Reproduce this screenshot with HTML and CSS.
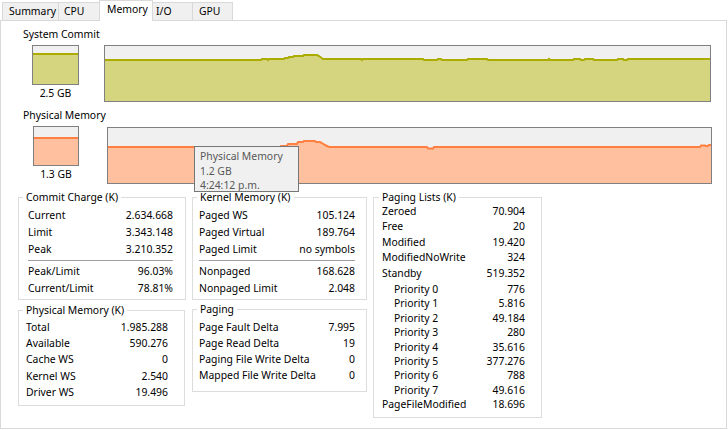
FILE: index.html
```html
<!DOCTYPE html>
<html lang="en">
<head>
<meta charset="utf-8">
<title>System Information - Memory</title>
<link rel="stylesheet" href="styles.css">
</head>
<body>
<div class="tabs">
  <div class="tab tab-summary">Summary</div>
  <div class="tab tab-cpu">CPU</div>
  <div class="tab tab-memory active">Memory</div>
  <div class="tab tab-io">I/O</div>
  <div class="tab tab-gpu">GPU</div>
</div>
<div class="panel">
  <div class="label">System Commit</div>
  <div class="meter-row">
    <div class="mini mini-commit">
      <div class="mini-box"><div class="mini-fill fill-commit"></div></div>
      <div class="mini-val">2.5 GB</div>
    </div>
    <div class="graph graph-commit">
      <svg width="605" height="55" viewBox="0 0 605 55">
        <polygon class="area-commit" points="0,14 156,14 157,13 162,13 163,14 164,13 179,13 180,12 183,12 184,11 188,11 189,10 198,10 199,9 212,9 214,10 216,11.5 218,13 256,13 257,14 258,13 318,13 319,14 332,14 333,13 336,13 337,14 362,14 363,13 382,13 383,14 443,14 444,13 445,14 468,14 469,13 475,13 476,14 479,14 480,13 488,13 489,14 512,14 513,13 518,13 519,14 522,14 523,13 605,13 605,55 0,55"/>
        <polyline class="line-commit" points="0,14 156,14 157,13 162,13 163,14 164,13 179,13 180,12 183,12 184,11 188,11 189,10 198,10 199,9 212,9 214,10 216,11.5 218,13 256,13 257,14 258,13 318,13 319,14 332,14 333,13 336,13 337,14 362,14 363,13 382,13 383,14 443,14 444,13 445,14 468,14 469,13 475,13 476,14 479,14 480,13 488,13 489,14 512,14 513,13 518,13 519,14 522,14 523,13 605,13"/>
      </svg>
    </div>
  </div>
  <div class="label">Physical Memory</div>
  <div class="meter-row">
    <div class="mini mini-phys">
      <div class="mini-box"><div class="mini-fill fill-phys"></div></div>
      <div class="mini-val">1.3 GB</div>
    </div>
    <div class="graph graph-phys">
      <svg width="603" height="55" viewBox="0 0 603 55">
        <polygon class="area-phys" points="0,19 172,19 173,18 179,18 180,16 189,16 190,14 195,14 196,13 207,13 208,14 212,14 214,15 216,16.5 218,17.5 220,18.5 222,19 319,19 320,20.5 325,20.5 326,19 592,19 593,17.5 597,17.5 598,18 600,18 601,17 603,17 603,55 0,55"/>
        <polyline class="line-phys" points="0,19 172,19 173,18 179,18 180,16 189,16 190,14 195,14 196,13 207,13 208,14 212,14 214,15 216,16.5 218,17.5 220,18.5 222,19 319,19 320,20.5 325,20.5 326,19 592,19 593,17.5 597,17.5 598,18 600,18 601,17 603,17"/>
      </svg>
    </div>
  </div>

  <div class="stats">
    <div class="col col-1">
      <fieldset class="group g-commit">
        <legend>Commit Charge (K)</legend>
        <div class="row r17"><span>Current</span><span>2.634.668</span></div>
        <div class="row r17"><span>Limit</span><span>3.343.148</span></div>
        <div class="row r17"><span>Peak</span><span>3.210.352</span></div>
        <div class="sep"></div>
        <div class="row r17"><span>Peak/Limit</span><span>96.03%</span></div>
        <div class="row r17"><span>Current/Limit</span><span>78.81%</span></div>
      </fieldset>
      <fieldset class="group g-physmem">
        <legend>Physical Memory (K)</legend>
        <div class="row r16"><span>Total</span><span>1.985.288</span></div>
        <div class="row r16"><span>Available</span><span>590.276</span></div>
        <div class="row r16"><span>Cache WS</span><span>0</span></div>
        <div class="row r16"><span>Kernel WS</span><span>2.540</span></div>
        <div class="row r16"><span>Driver WS</span><span>19.496</span></div>
      </fieldset>
    </div>
    <div class="col col-2">
      <fieldset class="group g-kernel">
        <legend>Kernel Memory (K)</legend>
        <div class="row r17"><span>Paged WS</span><span>105.124</span></div>
        <div class="row r17"><span>Paged Virtual</span><span>189.764</span></div>
        <div class="row r17"><span>Paged Limit</span><span>no symbols</span></div>
        <div class="sep"></div>
        <div class="row r17"><span>Nonpaged</span><span>168.628</span></div>
        <div class="row r17"><span>Nonpaged Limit</span><span>2.048</span></div>
      </fieldset>
      <fieldset class="group g-paging">
        <legend>Paging</legend>
        <div class="row r16b"><span>Page Fault Delta</span><span>7.995</span></div>
        <div class="row r16b"><span>Page Read Delta</span><span>19</span></div>
        <div class="row r16b"><span>Paging File Write Delta</span><span>0</span></div>
        <div class="row r16b"><span>Mapped File Write Delta</span><span>0</span></div>
      </fieldset>
    </div>
    <div class="col col-3">
      <fieldset class="group g-lists">
        <legend>Paging Lists (K)</legend>
        <div class="row r15"><span>Zeroed</span><span>70.904</span></div>
        <div class="row r15"><span>Free</span><span>20</span></div>
        <div class="row r15"><span>Modified</span><span>19.420</span></div>
        <div class="row r15"><span>ModifiedNoWrite</span><span>324</span></div>
        <div class="row r15"><span>Standby</span><span>519.352</span></div>
        <div class="priorities">
          <div class="row r14"><span class="indent">Priority 0</span><span>776</span></div>
          <div class="row r14"><span class="indent">Priority 1</span><span>5.816</span></div>
          <div class="row r14"><span class="indent">Priority 2</span><span>49.184</span></div>
          <div class="row r14"><span class="indent">Priority 3</span><span>280</span></div>
          <div class="row r14"><span class="indent">Priority 4</span><span>35.616</span></div>
          <div class="row r14"><span class="indent">Priority 5</span><span>377.276</span></div>
          <div class="row r14"><span class="indent">Priority 6</span><span>788</span></div>
          <div class="row r14"><span class="indent">Priority 7</span><span>49.616</span></div>
        </div>
        <div class="row r15b"><span>PageFileModified</span><span>18.696</span></div>
      </fieldset>
    </div>
  </div>

  <div class="tooltip">Physical Memory<br>1.2 GB<br>4:24:12 p.m.</div>
</div>
</body>
</html>
```
FILE: styles.css
```css
* { box-sizing: border-box; }
html, body { margin: 0; padding: 0; background: #fff; }
body {
  font-family: "Noto Sans", "Open Sans", sans-serif;
  font-size: 10.4px;
  color: #000;
  width: 728px;
  height: 430px;
  overflow: hidden;
}

/* tabs */
.tabs { display: flex; align-items: flex-end; height: 20px; padding-left: 3px; }
.tab {
  height: 18px;
  margin-left: -1px;
  border: 1px solid #d9d9d9;
  border-bottom: 0;
  background: #f0f0f0;
  line-height: 17px;
  white-space: nowrap;
}
.tab.active {
  height: 21px;
  margin-bottom: -1px;
  background: #fff;
  line-height: 16px;
  position: relative;
  z-index: 2;
}
.tab-summary { width: 57px; padding-left: 6px; }
.tab-cpu { width: 42px; padding-left: 5px; }
.tab-memory { width: 54px; padding-left: 7px; }
.tab-io { width: 41px; padding-left: 3px; }
.tab-gpu { width: 41px; padding-left: 6px; }

/* panel */
.panel {
  position: relative;
  z-index: 1;
  width: 727px;
  height: 409px;
  border: 1px solid #d9d9d9;
  background: #fff;
}
.label { height: 14px; line-height: 14px; margin: 6px 0 0 22px; white-space: nowrap; }
.meter-row { display: flex; align-items: flex-start; margin-top: 4px; }
.mini-commit { margin-left: 31px; width: 47px; }
.mini-phys { margin-left: 32px; width: 46px; }
.mini-box {
  height: 40px;
  border: 1px solid #808080;
  background: #f0f0f0;
  display: flex;
  flex-direction: column;
  justify-content: flex-end;
}
.mini-fill { border-top: 2px solid; }
.fill-commit { height: 31px; border-top-color: #abab00; background: #d5d580; }
.fill-phys { height: 28px; border-top-color: #ff8040; background: #ffc09f; }
.mini-val { margin-top: 1px; line-height: 14px; text-align: center; white-space: nowrap; }

.graph { height: 57px; border: 1px solid #808080; background: #f0f0f0; }
.graph svg { display: block; }
.graph-commit { margin-left: 25px; width: 607px; }
.graph-phys { margin-left: 28px; width: 605px; margin-top: 1px; }
.area-commit { fill: #d5d580; }
.line-commit { fill: none; stroke: #abab00; stroke-width: 2; }
.area-phys { fill: #ffc09f; }
.line-phys { fill: none; stroke: #ff8040; stroke-width: 2; }

/* stats */
.stats { display: flex; align-items: flex-start; gap: 6px; margin: 6px 0 0 17px; }
.col { display: flex; flex-direction: column; align-items: flex-start; }
.col-1 { width: 168px; }
.col-2 { width: 175px; }
.col-3 { width: 169px; }

.group {
  margin: 0;
  border: 1px solid #dcdcdc;
  min-width: 0;
  min-inline-size: 0;
}
.group legend { padding: 0 3px; line-height: 14px; white-space: nowrap; }

.row { display: flex; justify-content: space-between; white-space: nowrap; }
.r17 { height: 17px; line-height: 17px; }
.r16 { height: 16.2px; line-height: 16.2px; }
.r16b { height: 16px; line-height: 16px; }
.r15 { height: 15.4px; line-height: 15.4px; }
.r15b { height: 15px; line-height: 15px; }
.r14 { height: 14.4px; line-height: 14.4px; }
.indent { padding-left: 12px; }
.priorities { margin-top: 1px; }
.sep { height: 1px; background: #a0a0a0; margin: 2px 0; }

.g-commit { width: 168px; padding: 2.5px 12px 2.5px 9px; }
.g-commit legend { margin-left: -5px; }
.g-physmem { width: 167px; margin-top: 3px; padding: 2px 16px 5px 7px; }
.g-physmem legend { margin-left: -3px; }
.g-kernel { width: 175px; padding: 2.5px 11px 2.5px 6px; }
.g-kernel legend { margin-left: -2px; }
.g-paging { width: 175px; margin-top: 2px; padding: 3px 11px 8px 6px; }
.g-paging legend { margin-left: -2px; }
.g-lists { width: 169px; margin-top: 1px; padding: 0 16px 4.8px 8px; }
.g-lists legend { margin-left: -3px; line-height: 13px; }

/* tooltip */
.tooltip {
  position: absolute;
  left: 193px;
  top: 125px;
  width: 105px;
  height: 46px;
  border: 1px solid #767676;
  background: #f0f0f0;
  color: #575757;
  padding: 2px 0 0 5px;
  line-height: 14.5px;
  white-space: nowrap;
  overflow: hidden;
  z-index: 3;
}
```
